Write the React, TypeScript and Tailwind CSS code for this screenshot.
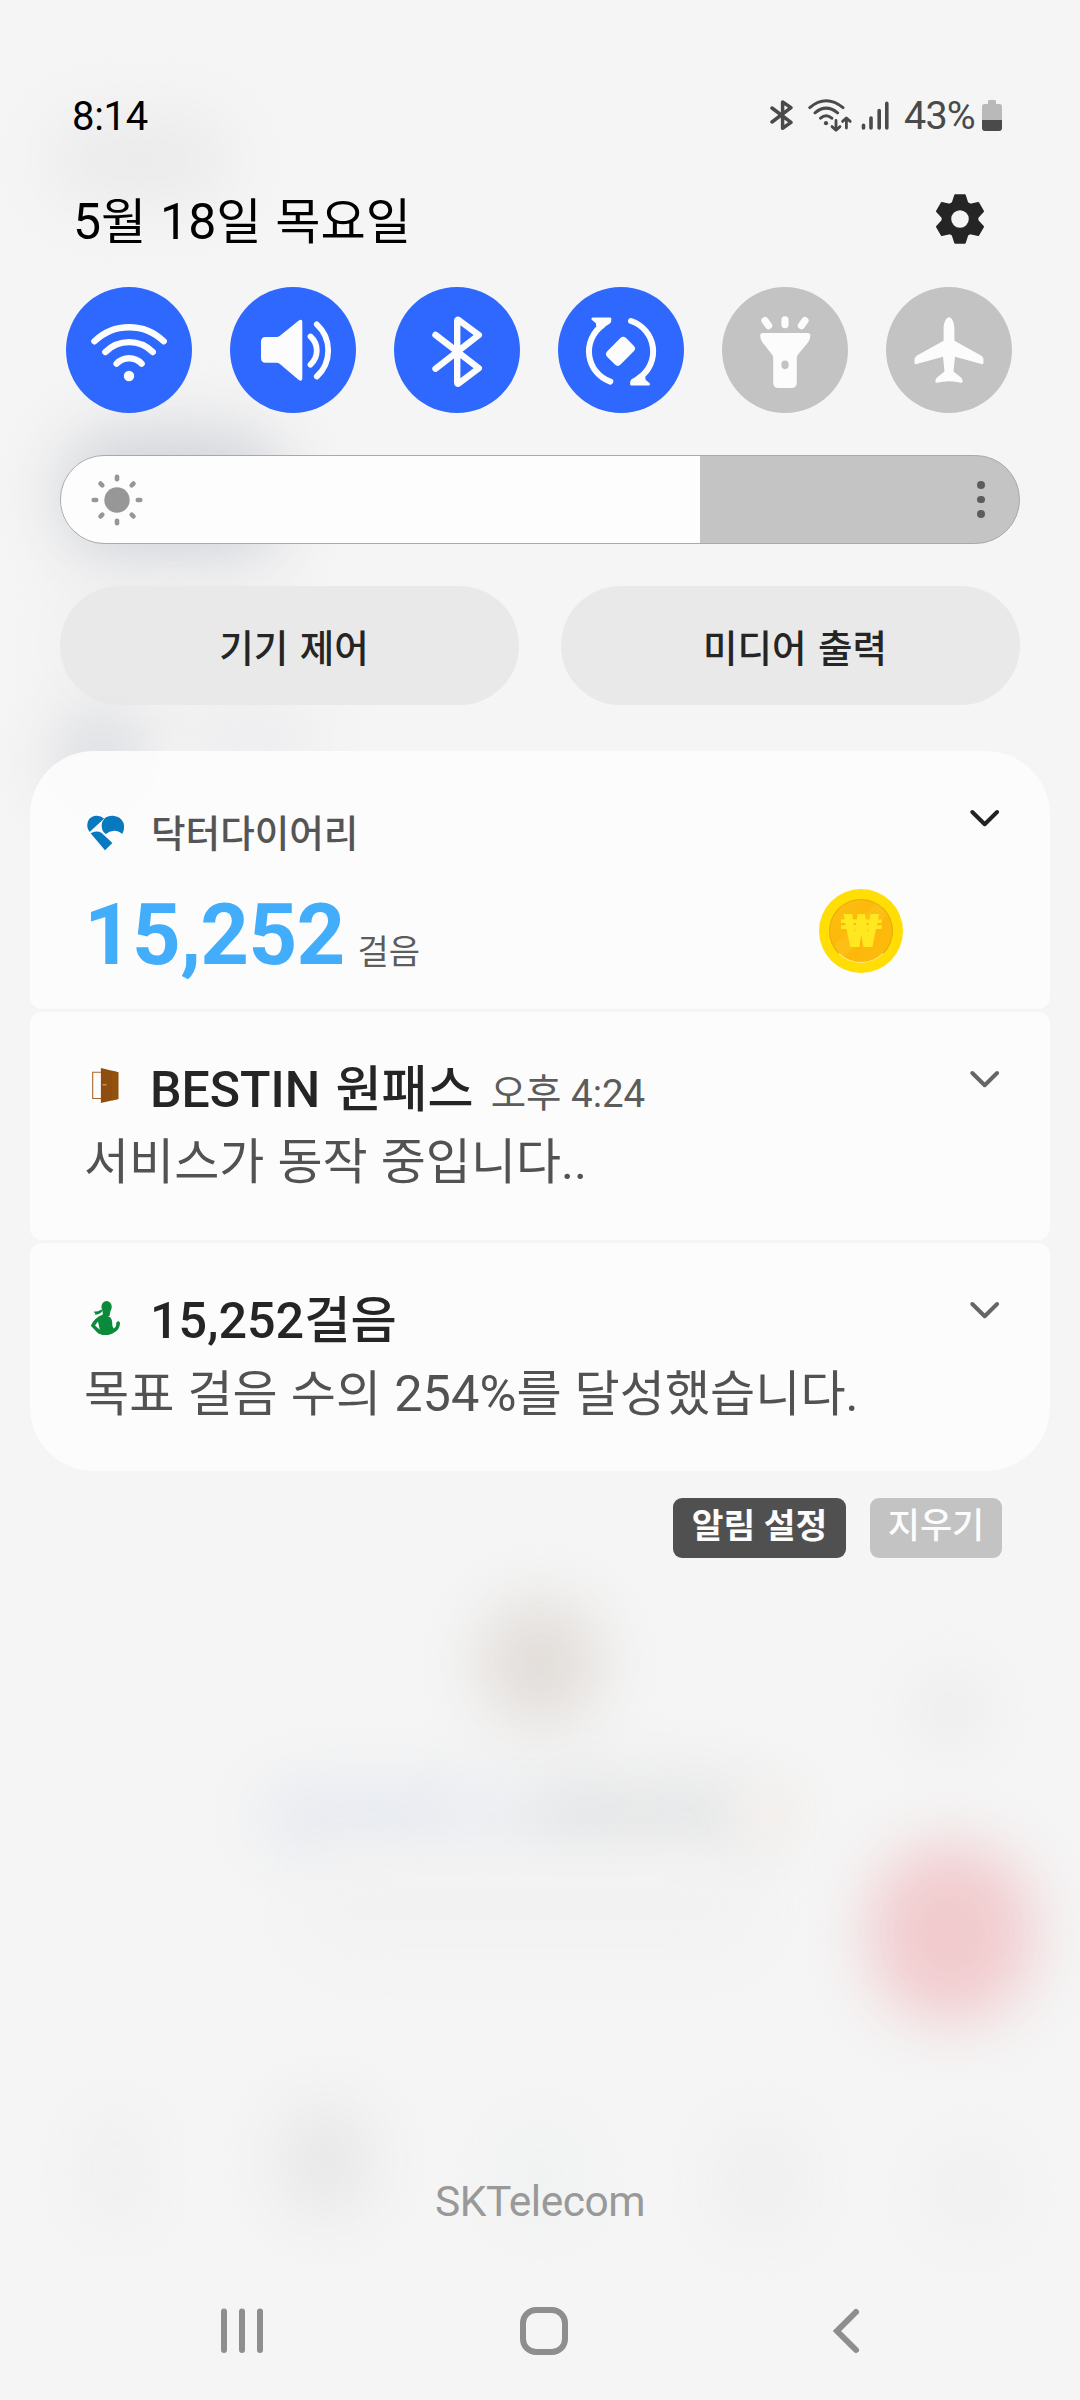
import type { ReactNode } from "react";

const TEETH = [0, 60, 120, 180, 240, 300];
const RAYS = [0, 45, 90, 135, 180, 225, 270, 315];

function Backdrop() {
  return (
    <div className="pointer-events-none absolute inset-0 overflow-hidden">
      <div className="absolute left-[50px] top-[115px] h-[90px] w-[180px] rounded-full bg-[#ebebeb] blur-[30px]" />
      <div className="absolute left-[60px] top-[430px] h-[130px] w-[225px] rounded-[60px] bg-[#d2d4d9] blur-[32px]" />
      <div className="absolute left-[60px] top-[590px] h-[100px] w-[230px] rounded-[60px] bg-[#eeeef0] blur-[28px]" />
      <div className="absolute left-[50px] top-[705px] h-[110px] w-[100px] rounded-full bg-[#dfe0e4] blur-[28px]" />
      <div className="absolute left-[180px] top-[700px] h-[90px] w-[140px] rounded-full bg-[#eeeef0] blur-[26px]" />
      <div className="absolute left-[480px] top-[1600px] h-[125px] w-[120px] rounded-full bg-[#e2ddd9] blur-[30px]" />
      <div className="absolute left-[260px] top-[1778px] h-[75px] w-[230px] rounded-full bg-[#e8ebf1] blur-[28px]" />
      <div className="absolute left-[440px] top-[1785px] h-[70px] w-[160px] rounded-full bg-[#edf0f3] blur-[24px]" />
      <div className="absolute left-[530px] top-[1775px] h-[85px] w-[220px] rounded-full bg-[#e6e7e8] blur-[30px]" />
      <div className="absolute left-[300px] top-[1850px] h-[110px] w-[460px] rounded-full bg-[#f2f2f2] blur-[24px]" />
      <div className="absolute left-[740px] top-[1780px] h-[70px] w-[60px] rounded-full bg-[#f3efec] blur-[22px]" />
      <div className="absolute left-[910px] top-[1670px] h-[80px] w-[80px] rounded-full bg-[#eeeeef] blur-[24px]" />
      <div className="absolute left-[868px] top-[1843px] h-[180px] w-[166px] rounded-full bg-[#f1cbce] blur-[30px]" />
      <div className="absolute left-[75px] top-[2110px] h-[120px] w-[80px] rounded-full bg-[#f1f1f1] blur-[20px]" />
      <div className="absolute left-[280px] top-[2105px] h-[110px] w-[90px] rounded-full bg-[#e7e7e7] blur-[30px]" />
      <div className="absolute left-[490px] top-[2120px] h-[110px] w-[100px] rounded-full bg-[#f1f2f2] blur-[20px]" />
      <div className="absolute left-[710px] top-[2120px] h-[120px] w-[100px] rounded-full bg-[#f0f0f0] blur-[24px]" />
      <div className="absolute left-[920px] top-[2140px] h-[100px] w-[100px] rounded-full bg-[#f1f1f1] blur-[22px]" />
    </div>
  );
}

function StatusIcons() {
  return (
    <div className="flex items-center text-[#4a4a4a]">
      <svg className="mt-[-4px] h-[32px] w-[24px]" viewBox="0 0 24 32" fill="none" stroke="currentColor" strokeWidth="3.5" strokeLinecap="round" strokeLinejoin="round">
        <path d="M2 9 21 23.400 12.600 29.200V3L21 8.600 2 23" />
      </svg>
      <svg className="ml-[14px] mt-[-2px] h-[36px] w-[46px]" viewBox="0 0 46 36" fill="none" stroke="currentColor" strokeWidth="3" strokeLinecap="round" strokeLinejoin="round">
        <path d="M1.800 9.600Q18 -4 35 9.600M7 14.800Q18 5.400 29.600 14.800M12.600 20.200Q18 15.400 23.800 20.200" />
        <circle cx="18" cy="25.200" r="2.100" fill="currentColor" stroke="none" />
        <path strokeWidth="2.800" d="M28 22.400V32M24 28.600l4 3.600 4-3.600M38.400 30V20.400M34.600 23.400l3.800-3.400 3.800 3.400" />
      </svg>
      <svg className="ml-[7px] mt-[-3px] h-[31px] w-[29px]" viewBox="0 0 29 31" fill="none" stroke="currentColor" strokeWidth="3.600" strokeLinecap="round">
        <path d="M2.500 25.200V28M10 18v10M18.200 10.600V28M25.800 3.400V28" />
      </svg>
      <span className="ml-[14.500px] mt-[-2px] text-[39.500px] leading-[48px] tracking-[-0.800px]">43%</span>
      <svg className="ml-[7px] mt-[-3px] h-[31px] w-[20px]" viewBox="0 0 20 31">
        <path fill="#b9b9b9" d="M7.400 0h5.200a1.400 1.400 0 0 1 1.400 1.400V4h3.400A2.600 2.600 0 0 1 20 6.600V20H0V6.600A2.600 2.600 0 0 1 2.600 4H6V1.400A1.400 1.400 0 0 1 7.400 0Z" />
        <path fill="#4a4a4a" d="M0 20h20v8a3 3 0 0 1-3 3H3a3 3 0 0 1-3-3Z" />
      </svg>
    </div>
  );
}

function GearIcon() {
  return (
    <svg className="h-[52px] w-[52px] text-[#252525]" viewBox="-26 -26 52 52">
      <circle r="13.600" fill="none" stroke="currentColor" strokeWidth="9.600" />
      {TEETH.map((a) => (
        <path key={a} transform={`rotate(${a})`} d="M-4.800 -23.800H4.800L7.600 -15H-7.600Z" fill="currentColor" stroke="currentColor" strokeWidth="2" strokeLinejoin="round" />
      ))}
    </svg>
  );
}

function Toggle({ on, children }: { on?: boolean; children: ReactNode }) {
  return (
    <div className={`h-[126px] w-[126px] rounded-full text-[#fcfcfc] ${on ? "bg-[#2e68ff]" : "bg-[#c3c3c3]"}`}>
      <svg className="h-[126px] w-[126px]" viewBox="0 0 126 126" fill="none" stroke="currentColor" strokeLinecap="round" strokeLinejoin="round">
        {children}
      </svg>
    </div>
  );
}

function QuickToggles() {
  return (
    <div className="mt-[35px] flex justify-between pl-[66px] pr-[68px]">
      <Toggle on>
        <path strokeWidth="6.400" d="M28.500 54.300A49.600 49.600 0 0 1 97.700 54.300M39.400 65A33.300 33.300 0 0 1 86.800 65M50.600 76.700A17 17 0 0 1 75.600 76.700" />
        <circle cx="63" cy="89" r="5.200" fill="currentColor" stroke="none" />
      </Toggle>
      <Toggle on>
        <path fill="currentColor" stroke="none" d="M35.500 50H46.500Q48.300 50 49.600 48.900L68.500 33.700Q72.300 31.500 72.300 35V91.500Q72.300 95 68.500 92.800L49.600 76.700Q48.300 75.700 46.500 75.700H35.500Q31 75.700 31 71V54.700Q31 50 35.500 50Z" />
        <path strokeWidth="5.800" d="M80.500 49.500A19 19 0 0 1 80.500 77.700M86.800 37.300A35.600 35.600 0 0 1 86.800 89.500" />
      </Toggle>
      <Toggle on>
        <path strokeWidth="6.400" d="M41.500 47.900 84.800 81.300 64.600 96.500Q63.200 97.300 63.200 95.500V34Q63.200 32.200 64.600 33L84.800 48 41.500 81.700" />
      </Toggle>
      <Toggle on>
        <path strokeWidth="6" d="M52.300 94.600A32 32 0 0 1 44.500 38.300M73 34A32 32 0 0 1 81 91" />
        <path strokeWidth="3" fill="currentColor" d="M34.900 31.900H51.800Q52 35.300 50 36L42 41 39.500 38V35.500ZM90.500 97.100H73.600Q73.400 93.700 75.400 93L83.400 88 86 91V93.500Z" />
        <rect x="49.200" y="54.900" width="26.600" height="18.800" rx="4" transform="rotate(-45 62.500 64.300)" fill="currentColor" stroke="none" />
      </Toggle>
      <Toggle>
        <path strokeWidth="7.200" d="M63 32.800V37.600M43 33.600 46.600 38.600M83 33.600 79.400 38.600" />
        <path fillRule="evenodd" fill="currentColor" stroke="none" d="M40.500 46H85.800Q88.400 46 88.400 48.600 88.400 52.500 86 55.500L76 67.500Q74.800 69 74.800 71V95.500Q74.800 101 69.300 101H56.700Q51.200 101 51.200 95.500V71Q51.200 69 50 67.500L40.500 55.500Q38.200 52.500 38.200 48.600 38.200 46 40.500 46ZM63 73.600A3.600 3.600 0 0 0 59.400 77.200V78.600A3.600 3.600 0 0 0 66.600 78.600V77.200A3.600 3.600 0 0 0 63 73.600Z" />
      </Toggle>
      <Toggle>
        <path fill="currentColor" stroke="none" d="M63 30.300C60 30.300 57.600 36 57.600 42V53.800L31 68.500Q28.500 70 28.500 73.500V75.500Q28.500 77.600 30.500 77L57 69.700 58.500 84.500 51 90.500Q49.300 92 49.300 94.500 49.300 96 51 95.700 63 92.600 75 95.700 76.700 96 76.700 94.500 76.700 92 75 90.500L67.500 84.500 69 69.700 95.500 77Q97.500 77.600 97.500 75.500V73.500Q97.500 70 95 68.500L68.400 53.800V42C68.400 36 66 30.300 63 30.300Z" />
      </Toggle>
    </div>
  );
}

function BrightnessSlider() {
  return (
    <div className="mx-[60px] mt-[42px] flex h-[89px] overflow-hidden rounded-full border border-[#a9a9ab] bg-[#c4c4c4]">
      <div className="flex w-[639px] items-center bg-[#fdfdfd] pl-[27.500px]">
        <svg className="h-[56px] w-[56px] text-[#979797]" viewBox="-28 -28 56 56">
          <circle r="12.700" fill="currentColor" />
          {RAYS.map((a) => (
            <path key={a} transform={`rotate(${a})`} d="M0 -23.300V-20.800" stroke="currentColor" strokeWidth="4.600" strokeLinecap="round" />
          ))}
        </svg>
      </div>
      <div className="flex flex-1 flex-col items-end justify-center gap-[6.400px] pr-[34px]">
        <span className="h-[7.800px] w-[7.800px] rounded-full bg-[#5c5c5c]" />
        <span className="h-[7.800px] w-[7.800px] rounded-full bg-[#5c5c5c]" />
        <span className="h-[7.800px] w-[7.800px] rounded-full bg-[#5c5c5c]" />
      </div>
    </div>
  );
}

function PillButton({ label }: { label: string }) {
  return (
    <button className="flex h-[119px] flex-1 items-center justify-center rounded-full bg-[#e8e8e8]/95 pl-[9px] pt-[6px] text-[37.500px] font-medium leading-[48px] text-[#252525] [word-spacing:2px]">
      {label}
    </button>
  );
}

function Chevron({ color }: { color: string }) {
  return (
    <svg className="absolute right-[47px] top-[56px] h-[22px] w-[36px]" viewBox="0 0 36 22" fill="none" stroke={color} strokeWidth="4" strokeLinecap="round" strokeLinejoin="round">
      <path d="M5.300 5 17.700 17.200 30.100 5" />
    </svg>
  );
}

function HeartIcon() {
  return (
    <svg className="h-[40px] w-[42px]" viewBox="0 0 42 40" fill="#0878bf">
      <path d="M19.400 6.200 5.600 19A10.700 10.700 0 0 1 5 6.300Q8.500 2.400 13 2.800 17 3 20 5.600Z" />
      <path d="M19.600 19.300A11 11 0 0 1 20.500 5.600Q23.500 2.600 29 2.800 36.500 3.400 39.600 10 41 15.500 38.300 21 35.500 18 30 17.700 25 18 22 21Z" />
      <path d="M6.600 20.200Q12 17 17.400 19.800L28.400 30 21 37.300Z" />
    </svg>
  );
}

function DoorIcon() {
  return (
    <svg className="h-[40px] w-[42px]" viewBox="-6 0 42 40">
      <path d="M11 6.300H2.700V32.500H11" fill="none" stroke="#a5672a" strokeWidth="1.100" />
      <path d="M10.900 2 28.300 6.300V33L10.900 37Z" fill="#8d4e10" />
      <path d="M22 4.800 28.300 6.300V33L22 34.400Z" fill="#93530f" />
      <path d="M12.500 18.800h4" stroke="#e0a458" strokeWidth="1.200" />
    </svg>
  );
}

function WalkerIcon() {
  return (
    <svg className="h-[40px] w-[42px]" viewBox="-6 0 42 40" fill="#0b8a3c">
      <ellipse cx="16.600" cy="7.800" rx="5.200" ry="5.900" />
      <path d="M12.200 9 20.800 10 19.500 17H13Z" />
      <path d="M11.500 10.500 8 12.200 3.400 12.800 5.400 14.400 4.600 15.800Q10 15.500 12.500 12Z" />
      <path fillRule="evenodd" d="M13 15.500Q17 16.200 20.500 18.500 22.500 21 22.300 26.500L23.500 29.500Q26.500 28.500 26.300 23.500 29.500 20.500 30 24.500 29.500 31 24.500 33.200 21 36 15.500 36 9.500 36 7 33.200L.8 26.800Q4.500 18.500 13 15.500ZM8 22.500 5 26.500 9.800 30.800Z" />
    </svg>
  );
}

function Coin() {
  return (
    <div className="flex h-[84px] w-[84px] items-center justify-center rounded-full bg-[#ffdd05]">
      <div className="flex h-[64px] w-[64px] items-center justify-center rounded-full border border-[#e8a90c] border-b-[#ffe98a] bg-[linear-gradient(135deg,#fdbf14_0%,#fcb90a_38%,#fdbf16_42%,#fdbf16_55%,#fcb80a_60%,#fcbd0e_100%)] text-[46px] font-black leading-[64px] text-[#ffe81f]">
        <span className="scale-x-110">₩</span>
      </div>
    </div>
  );
}

export default function App() {
  return (
    <div className="relative flex h-[2400px] w-[1080px] flex-col overflow-hidden bg-[#f5f5f5] font-['Roboto','Noto_Sans_CJK_KR',sans-serif]">
      <Backdrop />
      <div className="relative flex flex-1 flex-col">
        <header className="mt-[93px] flex h-[48px] items-center justify-between pl-[72px] pr-[78px]">
          <span className="text-[40px] leading-[48px] tracking-[-0.300px] text-black">8:14</span>
          <StatusIcons />
        </header>

        <div className="mt-[51px] flex h-[60px] items-center justify-between pl-[73px] pr-[94px]">
          <h1 className="text-[49.200px] leading-[60px] text-black [word-spacing:1.500px]">
            <span className="text-[50px]">5</span>월 <span className="text-[50px]">18</span>일 목요일
          </h1>
          <div className="mt-[-6px]">
            <GearIcon />
          </div>
        </div>

        <QuickToggles />
        <BrightnessSlider />

        <div className="mx-[60px] mt-[42px] flex gap-[42px]">
          <PillButton label="기기 제어" />
          <PillButton label="미디어 출력" />
        </div>

        <main className="mx-[30px] mt-[46px] flex flex-col gap-[3px]">
          <section className="relative h-[258px] rounded-b-[12px] rounded-t-[64px] bg-[#fcfcfc]/95 pl-[54px] pt-[61px]">
            <Chevron color="#222222" />
            <div className="flex h-[44px] items-center">
              <div className="mt-[-3px]"><HeartIcon /></div>
              <span className="ml-[25px] text-[37.600px] font-medium leading-[44px] text-[#555555]">닥터다이어리</span>
            </div>
            <div className="mt-[29px] flex items-baseline">
              <span className="text-[85px] font-bold leading-[100px] tracking-[-0.700px] text-[#42adfb]">15,252</span>
              <span className="ml-[13px] text-[34px] leading-[40px] text-[#5c5c5c]">걸음</span>
            </div>
            <div className="absolute left-[789px] top-[138px]">
              <Coin />
            </div>
          </section>

          <section className="relative h-[228px] rounded-[12px] bg-[#fcfcfc]/95 pl-[54px] pt-[48px]">
            <Chevron color="#666666" />
            <div className="flex h-[60px] items-center">
              <div className="mt-[-8px]"><DoorIcon /></div>
              <div className="ml-[24px] flex items-baseline">
                <span className="text-[50px] font-medium leading-[60px] text-[#252525] [word-spacing:3px]">BESTIN 원패스</span>
                <span className="ml-[17px] text-[38.500px] leading-[40px] text-[#5c5c5c]">오후 4:24</span>
              </div>
            </div>
            <p className="mt-[13px] text-[49px] leading-[60px] text-[#525252] [word-spacing:1px]">서비스가 동작 중입니다..</p>
          </section>

          <section className="relative h-[228px] rounded-b-[64px] rounded-t-[12px] bg-[#fcfcfc]/95 pl-[54px] pt-[48px]">
            <Chevron color="#666666" />
            <div className="flex h-[60px] items-center">
              <div className="mt-[-5px]"><WalkerIcon /></div>
              <span className="ml-[24px] text-[50.300px] font-medium leading-[60px] text-[#252525]">15,252걸음</span>
            </div>
            <p className="mt-[13px] text-[49.100px] leading-[60px] text-[#525252] [word-spacing:0.900px]">
              목표 걸음 수의 <span className="text-[50.500px]">254%</span>를 달성했습니다.
            </p>
          </section>
        </main>

        <div className="mr-[78px] mt-[27px] flex justify-end gap-[24px] text-[34.500px] font-bold leading-[54px] text-[#fcfcfc]">
          <button className="h-[60px] w-[173px] rounded-[9px] bg-[#505050] pb-[4px]">알림 설정</button>
          <button className="h-[60px] w-[132px] rounded-[9px] bg-[#c3c3c3] pb-[4px]">
            <span className="text-[35px] font-medium leading-[54px]">지우기</span>
          </button>
        </div>

        <p className="mt-auto text-center text-[42.500px] leading-[52px] tracking-[-0.500px] text-[#999999]">SKTelecom</p>
        <nav className="mb-[43px] mt-[77px] flex h-[52px] items-center justify-between pl-[218px] pr-[216px] text-[#8e8e8e]">
          <svg className="h-[52px] w-[48px]" viewBox="0 0 48 52" stroke="currentColor" strokeWidth="6" strokeLinecap="round">
            <path d="M6 6.500V45M24 6.500V45M42 6.500V45" />
          </svg>
          <svg className="mr-[8px] h-[52px] w-[52px]" viewBox="0 0 52 52" fill="none" stroke="currentColor" strokeWidth="6">
            <rect x="5" y="5" width="42" height="42" rx="13" />
          </svg>
          <svg className="h-[52px] w-[34px]" viewBox="0 0 34 52" fill="none" stroke="currentColor" strokeWidth="6" strokeLinecap="round" strokeLinejoin="miter">
            <path d="M26 7 7 26 26 45" />
          </svg>
        </nav>
      </div>
    </div>
  );
}
